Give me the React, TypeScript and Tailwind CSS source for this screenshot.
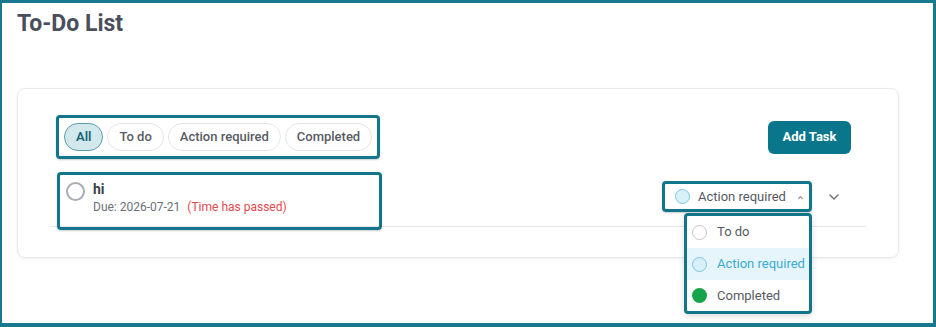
import { FC } from 'react';

const filters = ['All', 'To do', 'Action required', 'Completed'];

const StatusDot: FC<{ kind: 'todo' | 'action' | 'done' }> = ({ kind }) => {
  if (kind === 'done') return <span className="block w-[15px] h-[15px] rounded-full bg-[#17a34a]" />;
  if (kind === 'action')
    return <span className="block w-[15px] h-[15px] rounded-full border-[1.5px] border-[#7cc7e0] bg-[#d7f0fa]" />;
  return <span className="block w-[15px] h-[15px] rounded-full border-[1.5px] border-[#c4c7cc] bg-white" />;
};

export default function App() {
  return (
    <div
      className="w-[936px] h-[327px] bg-white border-t-[3px] border-l-2 border-r-[3px] border-b-4 border-[#18798e] px-[15px] text-[#4b5563]"
      style={{ fontFamily: 'Roboto, "Liberation Sans", sans-serif' }}
    >
      <h1 className="pt-[6px] text-[23px] leading-[30px] font-bold text-[#4a4f5c]">To-Do List</h1>

      <div className="mt-[49px] w-[882px] h-[170px] rounded-lg border border-[#e8e9ec] shadow-[0_1px_3px_rgba(0,0,0,0.06)] px-8 pt-[26px]">
        {/* filters + add */}
        <div className="flex items-center justify-between pl-[6px] pr-[15px]">
          <div className="flex items-center gap-[4px] border-[3px] border-[#12768b] rounded-[4px] px-[5px] py-[5px] shadow-[0_1px_2px_rgba(0,0,0,0.2)]">
            {filters.map((f) =>
              f === 'All' ? (
                <button
                  key={f}
                  className="h-[28px] px-[11px] rounded-full border border-[#5c9dac] bg-[#d2e8ec] text-[13px] font-semibold text-[#17677a]"
                >
                  {f}
                </button>
              ) : (
                <button
                  key={f}
                  className="h-[28px] px-[11px] rounded-full border border-[#e2e6ea] bg-white text-[13px] font-medium text-[#575b63]"
                >
                  {f}
                </button>
              )
            )}
          </div>
          <button className="h-[33px] w-[83px] rounded-md bg-[#09768b] text-white text-[13px] font-bold">
            Add Task
          </button>
        </div>

        {/* task row */}
        <div className="mt-[13px] flex items-start border-b border-[#e5e7eb] pl-[7px] pr-[26px]">
          <div className="w-[325px] h-[58px] -mb-1 border-[3px] border-[#12768b] rounded-[4px] shadow-[0_1px_2px_rgba(0,0,0,0.2)] pl-[6px] pt-[5px] flex gap-[8px]">
            <span className="mt-[2px] block w-[19px] h-[19px] rounded-full border-2 border-[#a9adb4]" />
            <div className="flex flex-col">
              <span className="text-[14px] leading-[18px] font-bold text-[#3b3f46]">hi</span>
              <span className="text-[12px] leading-[18px] text-[#6b7078]">
                Due: 2026-07-21
                <span className="ml-[7px] text-[#e5484d]">(Time has passed)</span>
              </span>
            </div>
          </div>

          <div className="ml-auto mt-[9px] flex items-center">
            <div className="relative">
              <div className="w-[150px] h-[31px] border-[3px] border-[#12768b] rounded-[4px] flex items-center pl-[10px] gap-[8px] shadow-[0_1px_2px_rgba(0,0,0,0.2)]">
                <StatusDot kind="action" />
                <span className="text-[13px] text-[#555a62]">Action required</span>
                <svg width="9" height="9" viewBox="0 0 10 10" className="ml-[2px] mt-[1px]">
                  <path d="M2.5 6.5 L5 4 L7.5 6.5" fill="none" stroke="#8f959d" strokeWidth="1.4" />
                </svg>
              </div>
              <div className="absolute left-[22px] top-[32px] w-[128px] h-[101px] bg-white border-[3px] border-[#12768b] rounded-[4px] shadow-[0_2px_6px_rgba(0,0,0,0.15)] flex flex-col">
                <div className="h-[32px] flex items-center gap-[10px] pl-[5px]">
                  <StatusDot kind="todo" />
                  <span className="text-[13px] text-[#555a62]">To do</span>
                </div>
                <div className="h-[32px] flex items-center gap-[10px] pl-[5px] bg-[#e6f5fb]">
                  <StatusDot kind="action" />
                  <span className="text-[13px] text-[#3aabd2]">Action required</span>
                </div>
                <div className="h-[31px] flex items-center gap-[10px] pl-[5px]">
                  <StatusDot kind="done" />
                  <span className="text-[13px] text-[#555a62]">Completed</span>
                </div>
              </div>
            </div>
            <svg width="12" height="8" viewBox="0 0 12 8" className="ml-[16px]">
              <path d="M1.5 1.5 L6 6 L10.5 1.5" fill="none" stroke="#6b7078" strokeWidth="1.4" />
            </svg>
          </div>
        </div>
      </div>
    </div>
  );
}
